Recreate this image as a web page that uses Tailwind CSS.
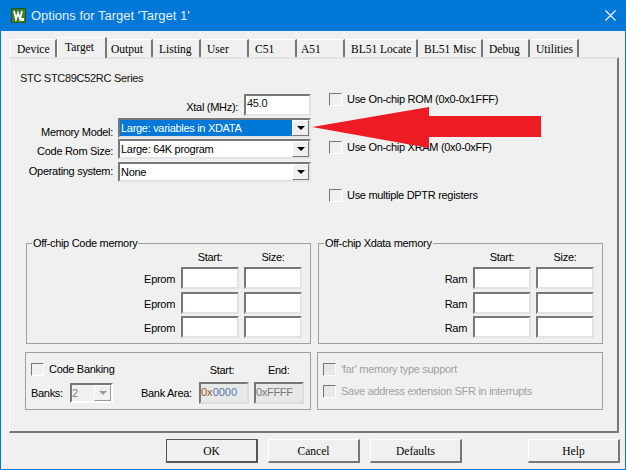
<!DOCTYPE html>
<html lang="en">
<head>
  <meta charset="UTF-8" />
  <title>Options for Target 'Target 1'</title>
  <script src="https://cdn.jsdelivr.net/npm/@tailwindcss/browser@4"></script>
</head>
<body class="w-[626px] h-[470px] overflow-hidden bg-[#f0f0f0] text-[11px] leading-[14px] tracking-[-0.3px] whitespace-nowrap text-black font-['Liberation_Sans',sans-serif]">
  <div class="relative w-[626px] h-[470px] flex flex-col border-l border-r border-b border-[#0078d7]">
    <!-- title bar -->
    <div class="h-[31px] -mx-px bg-[#0078d7] text-white flex items-center pl-[11px] pr-[10px] shrink-0">
      <svg width="15" height="15" viewBox="0 0 15 15">
        <rect x="0.5" y="0.5" width="14" height="14" fill="#3a7d34" stroke="#1f5a1c" />
        <path d="M3 3l2 8 2-6 2 6 2-8" fill="none" stroke="#fff" stroke-width="1.8" />
        <rect x="10" y="10" width="3" height="3" fill="#fff" />
      </svg>
      <span class="ml-[5px] text-[13px] tracking-normal text-[#e3f0fb]">Options for Target 'Target 1'</span>
      <svg class="ml-auto" width="11" height="11" viewBox="0 0 11 11"><path d="M0.5 0.5l10 10M10.5 0.5l-10 10" stroke="#fff" stroke-width="1.1" /></svg>
    </div>

    <!-- tabs -->
    <div class="flex items-end h-[26px] pl-[9px] font-['Liberation_Serif',serif] text-[11.5px] tracking-normal">
      <div class="w-[47px] h-[18px] pl-[6px] border-t border-l border-white border-r-2 border-r-[#777] flex items-center">Device</div>
      <div class="w-[50px] h-[21px] pl-[7px] -mb-px relative z-10 bg-[#f0f0f0] border-t border-l border-white border-r-2 border-r-[#777] flex items-center pb-[3px]">Target</div>
      <div class="w-[46px] h-[18px] pl-[4px] border-t border-white border-r-2 border-r-[#777] flex items-center">Output</div>
      <div class="w-[48px] h-[18px] pl-[6px] border-t border-white border-r-2 border-r-[#777] flex items-center">Listing</div>
      <div class="w-[48px] h-[18px] pl-[6px] border-t border-white border-r-2 border-r-[#777] flex items-center">User</div>
      <div class="w-[48px] h-[18px] pl-[6px] border-t border-white border-r-2 border-r-[#777] flex items-center">C51</div>
      <div class="w-[48px] h-[18px] pl-[4px] border-t border-white border-r-2 border-r-[#777] flex items-center">A51</div>
      <div class="w-[73px] h-[18px] pl-[6px] border-t border-white border-r-2 border-r-[#777] flex items-center">BL51 Locate</div>
      <div class="w-[65px] h-[18px] pl-[6px] border-t border-white border-r-2 border-r-[#777] flex items-center">BL51 Misc</div>
      <div class="w-[47px] h-[18px] pl-[6px] border-t border-white border-r-2 border-r-[#777] flex items-center">Debug</div>
      <div class="w-[49px] h-[18px] pl-[6px] border-t border-white border-r-2 border-r-[#777] flex items-center">Utilities</div>
    </div>

    <!-- tab sheet -->
    <div class="relative ml-[8px] w-[610px] h-[376px] border-t-2 border-l border-[#e3e3e3] border-l-white border-r-2 border-r-[#777] border-b-2 border-b-[#777] pl-[10px] shrink-0">
      <div class="mt-[12px] h-[14px] text-[#111]">STC STC89C52RC Series</div>

      <div class="flex mt-[4px] h-[107px]">
        <div class="w-[291px] pt-[5px]">
          <div class="flex justify-end items-center h-[22px]">
            <span class="mr-[6px] pt-[3px]">Xtal (MHz):</span>
            <div class="w-[67px] h-[22px] bg-white border-2 border-[#777] border-r-[#e3e3e3] border-b-[#e3e3e3] px-px text-[#111]">45.0</div>
          </div>
          <div class="flex h-[20px] mt-[2px]">
            <span class="w-[93px] text-right mr-[5px] pt-[7px]">Memory Model:</span>
            <div class="w-[193px] h-[20px] bg-white border-2 border-[#777] border-r-[#e3e3e3] border-b-[#e3e3e3] flex items-stretch">
              <span class="flex-1 bg-[#0078d7] text-white px-px flex items-center">Large: variables in XDATA</span>
              <span class="w-[17px] border border-white border-r-[#777] border-b-[#777] bg-[#f0f0f0] flex items-center justify-center"><span class="w-0 h-0 border-x-[4px] border-x-transparent border-t-[4px] border-t-black"></span></span>
            </div>
          </div>
          <div class="flex h-[20px] mt-[1px]">
            <span class="w-[93px] text-right mr-[5px] pt-[5px]">Code Rom Size:</span>
            <div class="w-[193px] h-[20px] bg-white border-2 border-[#777] border-r-[#e3e3e3] border-b-[#e3e3e3] flex items-stretch">
              <span class="flex-1 px-px flex items-center">Large: 64K program</span>
              <span class="w-[17px] border border-white border-r-[#777] border-b-[#777] bg-[#f0f0f0] flex items-center justify-center"><span class="w-0 h-0 border-x-[4px] border-x-transparent border-t-[4px] border-t-black"></span></span>
            </div>
          </div>
          <div class="flex h-[20px] mt-[3px]">
            <span class="w-[93px] text-right mr-[5px] pt-[2px]">Operating system:</span>
            <div class="w-[193px] h-[20px] bg-white border-2 border-[#777] border-r-[#e3e3e3] border-b-[#e3e3e3] flex items-stretch">
              <span class="flex-1 px-px flex items-center">None</span>
              <span class="w-[17px] border border-white border-r-[#777] border-b-[#777] bg-[#f0f0f0] flex items-center justify-center"><span class="w-0 h-0 border-x-[4px] border-x-transparent border-t-[4px] border-t-black"></span></span>
            </div>
          </div>
        </div>

        <div class="pl-[18px] pt-[3px]">
          <label class="flex items-center h-[14px] gap-[5px]"><span class="w-[13px] h-[13px] border border-[#777] border-r-white border-b-white bg-[#f0f0f0]"></span>Use On-chip ROM (0x0-0x1FFF)</label>
          <label class="flex items-center h-[14px] gap-[5px] mt-[34px]"><span class="w-[13px] h-[13px] border border-[#777] border-r-white border-b-white bg-[#f0f0f0]"></span>Use On-chip XRAM (0x0-0xFF)</label>
          <label class="flex items-center h-[14px] gap-[5px] mt-[34px]"><span class="w-[13px] h-[13px] border border-[#777] border-r-white border-b-white bg-[#f0f0f0]"></span>Use multiple DPTR registers</label>
        </div>
      </div>

      <!-- off-chip memory -->
      <div class="grid grid-cols-[285px_285px] gap-x-[7px] mt-[47px] ml-[6px]">
        <div class="relative h-[101px] border border-[#a0a0a0] pl-[154px] pt-[6px]">
          <span class="absolute left-[5px] -top-[8px] bg-[#f0f0f0] px-px">Off-chip Code memory</span>
          <div class="grid grid-cols-[58px_58px] gap-x-[5px] h-[17px] text-center"><span>Start:</span><span>Size:</span></div>
          <div class="grid grid-cols-[58px_58px] gap-x-[5px] gap-y-[2.5px] relative">
            <div class="h-[22px] bg-white border-2 border-[#777] border-r-[#e3e3e3] border-b-[#e3e3e3]"></div><div class="h-[22px] bg-white border-2 border-[#777] border-r-[#e3e3e3] border-b-[#e3e3e3]"></div>
            <div class="h-[22px] bg-white border-2 border-[#777] border-r-[#e3e3e3] border-b-[#e3e3e3]"></div><div class="h-[22px] bg-white border-2 border-[#777] border-r-[#e3e3e3] border-b-[#e3e3e3]"></div>
            <div class="h-[22px] bg-white border-2 border-[#777] border-r-[#e3e3e3] border-b-[#e3e3e3]"></div><div class="h-[22px] bg-white border-2 border-[#777] border-r-[#e3e3e3] border-b-[#e3e3e3]"></div>
            <div class="absolute -left-[45px] top-0 w-[39px] text-right leading-[24.5px]">Eprom<br />Eprom<br />Eprom</div>
          </div>
        </div>
        <div class="relative h-[101px] border border-[#a0a0a0] pl-[154px] pt-[6px]">
          <span class="absolute left-[5px] -top-[8px] bg-[#f0f0f0] px-px">Off-chip Xdata memory</span>
          <div class="grid grid-cols-[58px_58px] gap-x-[5px] h-[17px] text-center"><span>Start:</span><span>Size:</span></div>
          <div class="grid grid-cols-[58px_58px] gap-x-[5px] gap-y-[2.5px] relative">
            <div class="h-[22px] bg-white border-2 border-[#777] border-r-[#e3e3e3] border-b-[#e3e3e3]"></div><div class="h-[22px] bg-white border-2 border-[#777] border-r-[#e3e3e3] border-b-[#e3e3e3]"></div>
            <div class="h-[22px] bg-white border-2 border-[#777] border-r-[#e3e3e3] border-b-[#e3e3e3]"></div><div class="h-[22px] bg-white border-2 border-[#777] border-r-[#e3e3e3] border-b-[#e3e3e3]"></div>
            <div class="h-[22px] bg-white border-2 border-[#777] border-r-[#e3e3e3] border-b-[#e3e3e3]"></div><div class="h-[22px] bg-white border-2 border-[#777] border-r-[#e3e3e3] border-b-[#e3e3e3]"></div>
            <div class="absolute -left-[45px] top-0 w-[39px] text-right leading-[24.5px]">Ram<br />Ram<br />Ram</div>
          </div>
        </div>
      </div>

      <!-- banking -->
      <div class="grid grid-cols-[286px_286px] gap-x-[6px] mt-[8px] ml-[5px]">
        <div class="h-[58px] border border-[#a0a0a0] pl-[5px] pt-[9px]">
          <div class="flex h-[14px]">
            <label class="flex items-center gap-[5px] w-[174px]"><span class="w-[13px] h-[13px] border border-[#777] border-r-white border-b-white bg-[#f0f0f0]"></span>Code Banking</label>
            <span class="w-[34px] text-center pt-[1px]">Start:</span>
            <span class="w-[21px] text-center ml-[29px] pt-[1px]">End:</span>
          </div>
          <div class="flex items-center mt-[6px] h-[22px]">
            <span class="w-[39px]">Banks:</span>
            <div class="w-[43px] h-[20px] bg-[#f0f0f0] border-2 border-[#777] border-r-white border-b-white flex text-[#808080]">
              <span class="flex-1 flex items-center">2</span>
              <span class="w-[17px] border border-white border-r-[#999] border-b-[#999] flex items-center justify-center"><span class="w-0 h-0 border-x-[4px] border-x-transparent border-t-[4px] border-t-[#999]"></span></span>
            </div>
            <span class="ml-[28px] w-[53px] mr-[5px]">Bank Area:</span>
            <div class="w-[50px] h-[22px] border-2 border-[#777] border-r-[#ddd] border-b-[#ddd] bg-[#e8e8e8] flex items-center tracking-normal pb-[2px]"><span class="text-[#8a5a20]">0x</span><span class="text-[#5577aa]">0000</span></div>
            <div class="w-[50px] h-[22px] ml-[5px] border-2 border-[#777] border-r-[#ddd] border-b-[#ddd] bg-[#e8e8e8] flex items-center text-[#777] pb-[2px]">0xFFFF</div>
          </div>
        </div>
        <div class="h-[58px] border border-[#a0a0a0] pl-[5px] pt-[9px] text-[#a0a0a0]">
          <label class="flex items-center gap-[5px] h-[14px]"><span class="w-[13px] h-[13px] border border-[#777] border-r-white border-b-white bg-[#e8e8e8]"></span>'far' memory type support</label>
          <label class="flex items-center gap-[5px] h-[14px] mt-[8px]"><span class="w-[13px] h-[13px] border border-[#777] border-r-white border-b-white bg-[#e8e8e8]"></span>Save address extension SFR in interrupts</label>
        </div>
      </div>

      <!-- annotation arrow drawn over the dialog -->
      <svg class="absolute left-[302px] top-[48px]" width="232" height="44" viewBox="0 0 232 44">
        <path d="M0 20 L117 0 V9 H229 V30 H117 V41 Z" fill="#ed1c24" />
      </svg>
    </div>

    <!-- buttons -->
    <div class="flex mt-[6px] pl-[165px] font-['Liberation_Serif',serif] text-[11.5px] tracking-normal">
      <div class="w-[92px] h-[24px] border border-[#555] border-r-2 border-b-2 flex items-center justify-center">OK</div>
      <div class="w-[92px] h-[24px] ml-[10px] border border-white border-r-2 border-b-2 border-r-[#777] border-b-[#777] flex items-center justify-center">Cancel</div>
      <div class="w-[92px] h-[24px] ml-[10px] border border-white border-r-2 border-b-2 border-r-[#777] border-b-[#777] flex items-center justify-center">Defaults</div>
      <div class="w-[92px] h-[24px] ml-[66px] border border-white border-r-2 border-b-2 border-r-[#777] border-b-[#777] flex items-center justify-center">Help</div>
    </div>
  </div>
</body>
</html>
